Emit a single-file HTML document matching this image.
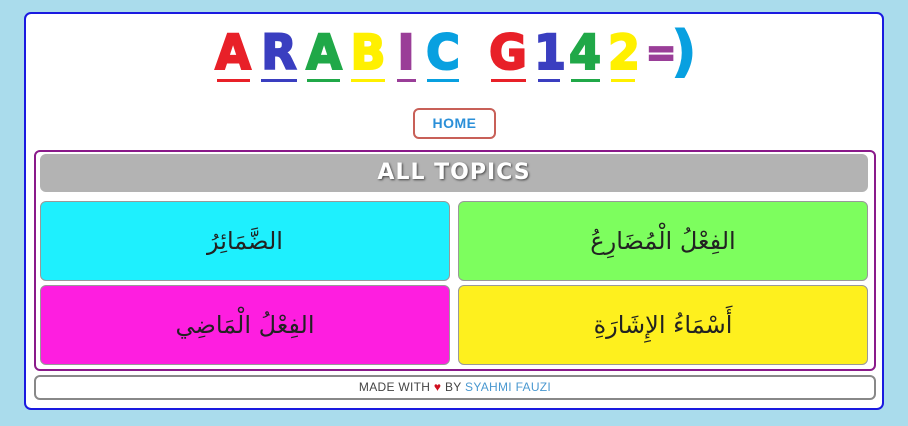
<!DOCTYPE html>
<html><head><meta charset="utf-8"><style>
body{margin:0;width:908px;height:426px;background:#aadcec;font-family:"Liberation Sans",sans-serif;position:relative;overflow:hidden}
.box{position:absolute;left:24px;top:12px;width:856px;height:394px;background:#fff;border:2px solid #1a1ae0;border-radius:7px}
.L{position:absolute;top:28px;font-family:"DejaVu Sans",sans-serif;font-weight:900;font-size:46px;line-height:48px;text-align:center;transform:scaleY(1.05);-webkit-text-stroke:2px currentColor}
.u{position:absolute;top:79px;height:3px}
.home{position:absolute;left:413px;top:108px;width:79px;height:27px;border:2px solid #c86058;border-radius:6px;color:#2a8fd8;font-weight:900;font-size:14px;line-height:27px;text-align:center;letter-spacing:.5px}
.topics{position:absolute;left:34px;top:150px;width:838px;height:217px;border:2px solid #8a1a8a;border-radius:6px}
.hdr{position:absolute;left:40px;top:154px;width:828px;height:38px;background:#b3b3b3;border-radius:6px;color:#fff;font-family:"DejaVu Sans",sans-serif;font-weight:bold;font-size:22px;line-height:38px;text-align:center;text-shadow:1px 1px 2px #444;letter-spacing:1px}
.c{position:absolute;width:408px;height:78px;border:1px solid #999;border-radius:6px;font-family:"DejaVu Sans","Noto Sans CJK SC",serif;font-size:24px;line-height:78px;text-align:center;color:#222}
.foot{position:absolute;left:34px;top:375px;width:838px;height:21px;border:2px solid #888;border-radius:6px;font-size:12px;line-height:21px;text-align:center;color:#444;letter-spacing:.3px}
</style></head><body>
<div class="box"></div>
<div class="L" style="left:215px;width:36px;color:#e82028">A</div><div class="u" style="left:217px;width:33px;background:#e82028"></div>
<div class="L" style="left:260px;width:38px;color:#3a3ec0">R</div><div class="u" style="left:261px;width:36px;background:#3a3ec0"></div>
<div class="L" style="left:305px;width:38px;color:#20a848">A</div><div class="u" style="left:307px;width:33px;background:#20a848"></div>
<div class="L" style="left:350px;width:36px;color:#fff000">B</div><div class="u" style="left:351px;width:34px;background:#fff000"></div>
<div class="L" style="left:395px;width:22px;color:#9a3e98">I</div><div class="u" style="left:397px;width:19px;background:#9a3e98"></div>
<div class="L" style="left:426px;width:34px;color:#08a0e0">C</div><div class="u" style="left:427px;width:32px;background:#08a0e0"></div>
<div class="L" style="left:489px;width:38px;color:#e82028">G</div><div class="u" style="left:491px;width:35px;background:#e82028"></div>
<div class="L" style="left:534px;width:28px;color:#3a3ec0">1</div><div class="u" style="left:538px;width:22px;background:#3a3ec0"></div>
<div class="L" style="left:568px;width:34px;color:#20a848">4</div><div class="u" style="left:571px;width:29px;background:#20a848"></div>
<div class="L" style="left:608px;width:30px;color:#fff000">2</div><div class="u" style="left:611px;width:24px;background:#fff000"></div>
<div class="L" style="left:646px;width:26px;color:#9a3e98;font-size:36px;top:30px">=</div>
<div class="L" style="left:672px;width:24px;color:#08a0e0;top:24px;font-size:52px;line-height:56px">)</div>
<div class="home">HOME</div>
<div class="topics"></div>
<div class="hdr">ALL TOPICS</div>
<div class="c" style="left:40px;top:201px;background:#1ef0fe" dir="rtl">الضَّمَائِرُ</div>
<div class="c" style="left:458px;top:201px;background:#7dfe5e" dir="rtl">الفِعْلُ الْمُضَارِعُ</div>
<div class="c" style="left:40px;top:285px;background:#fe1ee0" dir="rtl">الفِعْلُ الْمَاضِي</div>
<div class="c" style="left:458px;top:285px;background:#fef01e" dir="rtl">أَسْمَاءُ الإِشَارَةِ</div>
<div class="foot">MADE WITH <span style="color:#d01020">♥</span> BY <span style="color:#4a98d0">SYAHMI FAUZI</span></div>
</body></html>
